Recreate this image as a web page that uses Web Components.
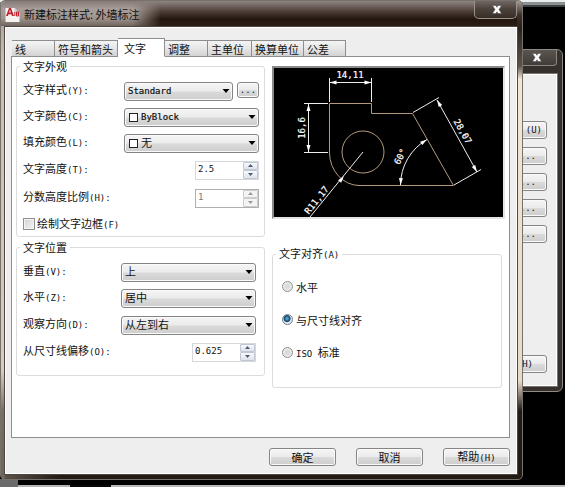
<!DOCTYPE html>
<html lang="zh-CN">
<head>
<meta charset="utf-8">
<title>新建标注样式: 外墙标注</title>
<style>
html { height: 100%; }
body {
  margin: 0; min-height: 100%; position: relative; overflow: hidden;
  background: #000; color: #111;
  font: 11px/14px "DejaVu Sans Mono", "Noto Sans CJK SC", monospace;
  --cjk: 11px "Noto Sans CJK SC", sans-serif;
}
</style>
</head>
<body>
<cad-desktop>
  <manager-window slot="back"></manager-window>
  <dialog-window heading="新建标注样式: 外墙标注">
    <tab-strip tabs="线,符号和箭头,文字,调整,主单位,换算单位,公差" widths="43,63,47,43,44,52,42" active="2"></tab-strip>
    <tab-page>
      <group-box slot="left" label="文字外观" class="looks">
        <combo-field label="文字样式" key="(Y):" value="Standard" more></combo-field>
        <combo-field label="文字颜色" key="(C):" value="ByBlock" swatch></combo-field>
        <combo-field label="填充颜色" key="(L):" value="无" swatch></combo-field>
        <spin-field label="文字高度" key="(T):" value="2.5"></spin-field>
        <spin-field label="分数高度比例" key="(H):" value="1" disabled></spin-field>
        <check-field label="绘制文字边框" key="(F)"></check-field>
      </group-box>
      <group-box slot="left" label="文字位置" class="place">
        <combo-field label="垂直" key="(V):" value="上"></combo-field>
        <combo-field label="水平" key="(Z):" value="居中"></combo-field>
        <combo-field label="观察方向" key="(D):" value="从左到右"></combo-field>
        <spin-field label="从尺寸线偏移" key="(O):" value="0.625"></spin-field>
      </group-box>
      <dimension-preview slot="right"></dimension-preview>
      <group-box slot="right" label="文字对齐" key="(A)" class="align">
        <radio-list></radio-list>
      </group-box>
    </tab-page>
    <push-button slot="footer" label="确定"></push-button>
    <push-button slot="footer" label="取消"></push-button>
    <push-button slot="footer" label="帮助" key="(H)"></push-button>
  </dialog-window>
</cad-desktop>

<script>
const base = `
  :host, *, *::before, *::after { box-sizing: border-box; }
  button, input, select { margin: 0; color: inherit; }
  .key { font: 9px/14px "DejaVu Sans Mono", monospace; }
`;
const face = `
  border: 1px solid #858585; border-radius: 3px;
  background: linear-gradient(#f5f5f5, #ebebeb 48%, #dadada 52%, #cdcdcd);
  box-shadow: inset 0 0 0 1px #fafafa;
`;
const keyed = (label, key) => `${label || ''}${key ? `<span class="key">${key}</span>` : ''}`;
const closeIcon = `<svg width="10" height="9" viewBox="0 0 10 9" aria-hidden="true"><path d="M0.5 .5H4L5 2.3 6 .5H9.500L7 4.500 9.500 8.500H6L5 6.700 4 8.500H.5L3 4.500Z" fill="#fff" stroke="#555" stroke-width=".6"/></svg>`;

class Part extends HTMLElement {
  connectedCallback() {
    if (this.shadowRoot) return;
    this.attachShadow({ mode: 'open' }).innerHTML = `<style>${base}${this.css()}</style>${this.html()}`;
  }
  a(name) { return this.getAttribute(name) || ''; }
}

customElements.define('cad-desktop', class extends Part {
  css() { return `
    :host { display: block; min-height: 100vh; padding-right: 42px; position: relative;
      background:
        linear-gradient(90deg, #b5b5b5 0 52px, #080808 52px 93px, #b9b9b9 93px) 18px 100% / 100% 2px no-repeat,
        linear-gradient(#6b6b6b, #6b6b6b) 0 100% / 18px 8px no-repeat,
        linear-gradient(#e8ecec 0 2px, #8b9090 2px 5px, #3c4141 5px) 0 0 / 100% 7px no-repeat,
        #000; }`; }
  html() { return `<slot name="back"></slot><slot></slot>`; }
});

customElements.define('manager-window', class extends Part {
  css() { return `
    :host { position: absolute; top: 49px; right: 2px; width: 80px; display: flex; flex-direction: column;
      border: 1px solid #8d8984; border-radius: 6px; background: #35302b; padding: 0 5px 5px; }
    header { height: 24px; display: flex; justify-content: flex-end; }
    .close { width: 42px; height: 16px; padding: 0 0 0 2px; display: grid; place-items: center; border: 1px solid #8b8783; border-top: 0;
      border-radius: 0 0 4px 4px; background: linear-gradient(#5c5651, #403b36); }
    main { height: 312px; background: #eee; border: 1px solid #fff; outline: 1px solid #77736e;
      display: flex; flex-direction: column; gap: 8px; padding: 46px 9px 12px 0; }
    .b { ${face} height: 18px; padding: 0 10px 0 0; text-align: right; font: 9px/14px "DejaVu Sans Mono", monospace; }
    .b:first-child { padding-right: 4px; }
    .b:last-child { margin-top: auto; padding-right: 13px; }
  `; }
  html() { return `<header><button class="close" aria-label="关闭">${closeIcon}</button></header>
    <main><button class="b">(U)</button>${'<button class="b">...</button>'.repeat(4)}<button class="b">H)</button></main>`; }
});

customElements.define('dialog-window', class extends Part {
  css() { return `
    :host { display: flex; flex-direction: column; position: relative; min-height: 480px; padding: 0 5px 5px 4px;
      border: 1px solid #77716c; border-radius: 5px;
      background:
        linear-gradient(#a59b96, #3c322c 14px, #2a201a 27px, #4a423c 50px, #5e5348 65px, #f4e5d5 78px, #e9d9c8 380px, #211a15 410px) 100% 0 / 5px 100% no-repeat,
        linear-gradient(#a59b96, #c9bdb4 60px, #d8cbc1 370px, #796e66 410px, #6e645c) 0 0 / 4px 100% no-repeat,
        linear-gradient(90deg, #5f554c, #211a15 60px) 0 100% / 100% 5px no-repeat,
        linear-gradient(#8f8580, #4a3b34 11px, #231610 18px, #2b1f18 27px); }
    header { height: 26px; display: flex; align-items: center; gap: 4px; }
    h1 { margin: 0; flex: 1; font: var(--cjk); line-height: 22px; color: #111; }
    .glow { position: absolute; left: 0; top: 0; width: 160px; height: 25px; border-radius: 5px 0 0 0;
      background: linear-gradient(#857a75, #a89d98 8px, #a0958f 17px, #6f645e);
      -webkit-mask-image: linear-gradient(90deg, #000 132px, transparent); mask-image: linear-gradient(90deg, #000 132px, transparent); }
    header > :not(.glow) { position: relative; }
    .close { align-self: flex-start; width: 43px; height: 18px; padding: 0 0 0 2px; display: grid; place-items: center;
      border: 1px solid #9a928d; border-top: 0; border-radius: 0 0 5px 5px; background: linear-gradient(#6f6661, #4a403a 50%, #382d27); }
    main { flex: 1; display: flex; flex-direction: column; background: #eee; border: 1px solid #fff; outline: 1px solid #4e4741;
      padding: 9px 6px 7px 5px; position: relative; }
    footer { display: flex; justify-content: flex-end; gap: 20px; padding-top: 10px; }
  `; }
  html() { return `<header><span class="glow"></span>
      <svg width="15" height="17" viewBox="0 0 14 17" aria-hidden="true"><path d="M0 2H9L14 7V16H0Z" fill="#f4f1f0"/><path d="M9 2V7H14Z" fill="#cfc9c7"/><path d="M.5 10 3.500 2H5.500L8.500 10H6.500L5.900 8.200H3L2.400 10ZM3.500 6.500H5.400L4.500 3.800Z" fill="#c4202c"/><path d="M9.300 6V10M11 6H13V10H11ZM11 8H13" fill="none" stroke="#c4202c"/></svg>
      <h1>${this.a('heading')}</h1><button class="close" aria-label="关闭">${closeIcon}</button></header>
    <main><slot></slot><footer><slot name="footer"></slot></footer></main>`; }
});

customElements.define('tab-strip', class extends Part {
  css() { return `
    :host { display: flex; align-items: flex-end; padding-left: 1px; height: 20px; position: relative; z-index: 1; margin-bottom: -1px; }
    button { font: var(--cjk); height: 17px; padding: 0 3px; line-height: 14px; text-align: left; white-space: nowrap;
      border: 1px solid #8e8e8e; border-left-width: 0; border-radius: 0; background: linear-gradient(#f4f4f4, #e6e6e6 50%, #d2d2d2); }
    button:first-child { border-left-width: 1px; }
    .on { height: 19px; padding-left: 6px; background: #fff; border-bottom-color: #fff; }
  `; }
  html() {
    const w = this.a('widths').split(',');
    return this.a('tabs').split(',').map((t, i) =>
      `<button role="tab" aria-selected="${i == this.a('active')}" class="${i == this.a('active') ? 'on' : ''}" style="flex:0 1 ${w[i]}px">${t}</button>`).join('');
  }
});

customElements.define('tab-page', class extends Part {
  css() { return `
    :host { flex: 1; display: grid; grid-template-columns: 249fr 233fr; gap: 7px; background: #fff; border: 1px solid #8e8e8e; padding: 2px 4px 10px; }
    .right { padding-top: 7px; display: flex; flex-direction: column; gap: 27px; }
    .left { display: flex; flex-direction: column; gap: 3px; }
    ::slotted(.looks) { --rows: 26px 26px 26px 28px 28px 24px; --end: 5px; }
    ::slotted(.place) { --rows: 26px 26px 28px 26px; --end: 8px; --foot: 10px; }
    ::slotted(.align) { --foot: 18px; margin-right: 3px; }
  `; }
  html() { return `<div class="left"><slot name="left"></slot></div><div class="right"><slot name="right"></slot></div>`; }
});

customElements.define('group-box', class extends Part {
  css() { return `
    :host { display: block; }
    fieldset { margin: 0; min-width: 0; border: 1px solid #dcdcdc; border-radius: 3px; padding: 0 var(--end, 5px) var(--foot, 0) 6px; }
    legend { font: var(--cjk); line-height: 14px; padding: 0 3px; margin-left: -3px; }
    .rows { display: grid; grid-template-rows: var(--rows, auto); padding-top: 5px; }
  `; }
  html() { return `<fieldset><legend>${keyed(this.a('label'), this.a('key'))}</legend><div class="rows"><slot></slot></div></fieldset>`; }
});

const rowCss = `
  :host { display: flex; align-items: center; }
  label { flex: 1; font: var(--cjk); line-height: 14px; padding-bottom: 2px; white-space: nowrap; }
`;

customElements.define('combo-field', class extends Part {
  css() { return rowCss + `
    .field { width: 135px; display: flex; gap: 4px; }
    .wrap { flex: 1; display: grid; align-items: center; }
    .wrap > * { grid-area: 1 / 1; }
    select { ${face} appearance: none; width: 100%; height: 19px; padding: 0 16px 0 3px; line-height: 15px;
      font-family: "DejaVu Sans Mono", "Noto Sans CJK SC", monospace; font-size: 11px; }
    select.latin { font-size: 9px; -webkit-text-stroke: .2px #111; }
    .sw select { padding-left: 16px; }
    .box { width: 9px; height: 9px; margin-left: 5px; border: 1px solid #222; background: #fff; pointer-events: none; z-index: 1; }
    .arrow { justify-self: end; margin-right: 3px; pointer-events: none; z-index: 1; }
    .more { ${face} width: 22px; height: 16px; align-self: flex-start; padding: 0; font: 9px/10px "DejaVu Sans Mono", monospace; }
  `; }
  html() {
    const v = this.a('value'), sw = this.hasAttribute('swatch');
    return `<label for="s">${keyed(this.a('label'), this.a('key'))}</label>
      <div class="field"><div class="wrap ${sw ? 'sw' : ''}"><select id="s" class="${/^\w+$/.test(v) ? 'latin' : ''}"><option>${v}</option></select>
      ${sw ? '<span class="box"></span>' : ''}<svg class="arrow" width="8" height="4" viewBox="0 0 8 4"><path d="M.5 0H7.500L4 4Z" fill="#000"/></svg></div>
      ${this.hasAttribute('more') ? '<button class="more" aria-label="文字样式">...</button>' : ''}</div>`;
  }
});

customElements.define('spin-field', class extends Part {
  css() { return rowCss + `
    .box { width: 64px; height: 19px; display: flex; border: 1px solid #d4d7dc; background: #fff; }
    :host([disabled]) .box { border-color: #afafaf; color: #777; }
    input { flex: 1; width: 0; border: 0; background: none; padding: 0 0 2px 2px; font: 9px/14px "DejaVu Sans Mono", monospace; outline: 0; }
    .steps { width: 15px; display: flex; flex-direction: column; }
    .steps button { flex: 1; min-height: 0; padding: 0; display: grid; place-items: center; border: 1px solid #c0c7d2; border-radius: 1px; background: linear-gradient(#f8f9fb, #dfe3ea); color: #4b5b78; }
    :host([disabled]) .steps button { background: #f4f4f4; border-color: #ccc; color: #999; }
  `; }
  html() {
    const d = this.hasAttribute('disabled') ? 'disabled' : '';
    return `<label for="n">${keyed(this.a('label'), this.a('key'))}</label><div class="box"><input id="n" value="${this.a('value')}" ${d}>
      <span class="steps"><button ${d} aria-label="增加"><svg width="5" height="3" viewBox="0 0 5 3"><path d="M0 3H5L2.500 0Z" fill="currentColor"/></svg></button>
      <button ${d} aria-label="减少"><svg width="5" height="3" viewBox="0 0 5 3"><path d="M0 0H5L2.500 3Z" fill="currentColor"/></svg></button></span></div>`;
  }
});

customElements.define('check-field', class extends Part {
  css() { return rowCss + `
    :host { gap: 2px; }
    label { padding: 0; }
    input { appearance: none; width: 12px; height: 12px; border: 1px solid #8e8f8f; box-shadow: inset 0 0 0 1px #f4f4f4; background: linear-gradient(135deg, #cfd2d5, #f6f6f6); }
  `; }
  html() { return `<input type="checkbox" id="c"><label for="c">${keyed(this.a('label'), this.a('key'))}</label>`; }
});

customElements.define('radio-list', class extends Part {
  css() { return `
    :host { display: grid; grid-auto-rows: 33px; padding: 3px 0 0 3px; }
    label { display: flex; align-items: center; gap: 3px; font: var(--cjk); line-height: 14px; }
    .key { white-space: pre; }
    input { appearance: none; width: 11px; height: 11px; border: 1px solid #8e8f8f; border-radius: 50%; background: radial-gradient(#dcdcdc 30%, #fafafa); }
    input:checked { border-color: #6d7f8b; background: radial-gradient(circle at 45% 40%, #4f9bc8 0 1px, #123f63 3px, #e4ecf1 4px); }
  `; }
  html() { return `<label><input type="radio" name="r"><span>水平</span></label>
    <label><input type="radio" name="r" checked><span>与尺寸线对齐</span></label>
    <label><input type="radio" name="r"><span><span class="key">ISO </span>标准</span></label>`; }
});

customElements.define('push-button', class extends Part {
  css() { return `
    :host { display: block; }
    button { ${face} width: 67px; height: 18px; padding: 0; font: var(--cjk); line-height: 14px; display: block; }
  `; }
  html() { return `<button>${keyed(this.a('label'), this.a('key'))}</button>`; }
});

customElements.define('dimension-preview', class extends Part {
  css() { return `
    :host { display: block; border: 2px solid #8a8a8a; border-right-color: #e4e4e4; border-bottom-color: #e4e4e4; background: #000; }
    svg { display: block; width: 100%; height: auto; }
    text { font: 9px "DejaVu Sans Mono", monospace; fill: #fff; text-anchor: middle; stroke: #fff; stroke-width: .2px; }
  `; }
  html() {
    const tip = (x, y, r) => `<path d="M0 0L-7 -2V2Z" fill="#fff" stroke="none" transform="translate(${x} ${y}) rotate(${r})"/>`;
    return `<svg viewBox="2 2 229 149" role="img" aria-label="标注预览">
      <g fill="none" stroke="#b39a7c"><path d="M57.500 37.500H99.500V47.500H140.500L181.500 119.500H87A30 33 0 0 1 57.500 87Z"/><circle cx="91" cy="86" r="21"/></g>
      <g fill="none" stroke="#eee"><path d="M57.500 12V36M99.500 12V36M57.500 16.500H99.500M32 37.500H56M32 86.500H56M36.500 37.500V86M141 46.500L167 31.500M182 119L209 103.500M165 34L205 106M128.500 119A53 53 0 0 1 155 73.500M91 86L38 151"/></g>
      ${tip(57.5, 16.5, 180)}${tip(99.5, 16.5, 0)}${tip(36.5, 38, -90)}${tip(36.5, 86, 90)}${tip(165, 34, -120)}${tip(205, 106, 60)}${tip(128.5, 119, 94)}${tip(155, 73.5, -34)}${tip(72, 110, -51)}
      <text x="78" y="12">14,11</text>
      <text transform="translate(33 62) rotate(-90)">16,6</text>
      <text transform="translate(188 67) rotate(60)">28,07</text>
      <text transform="translate(131 92) rotate(-62)">60°</text>
      <text transform="translate(47 136) rotate(-51)">R11,17</text>
    </svg>`;
  }
});
</script>
</body>
</html>
